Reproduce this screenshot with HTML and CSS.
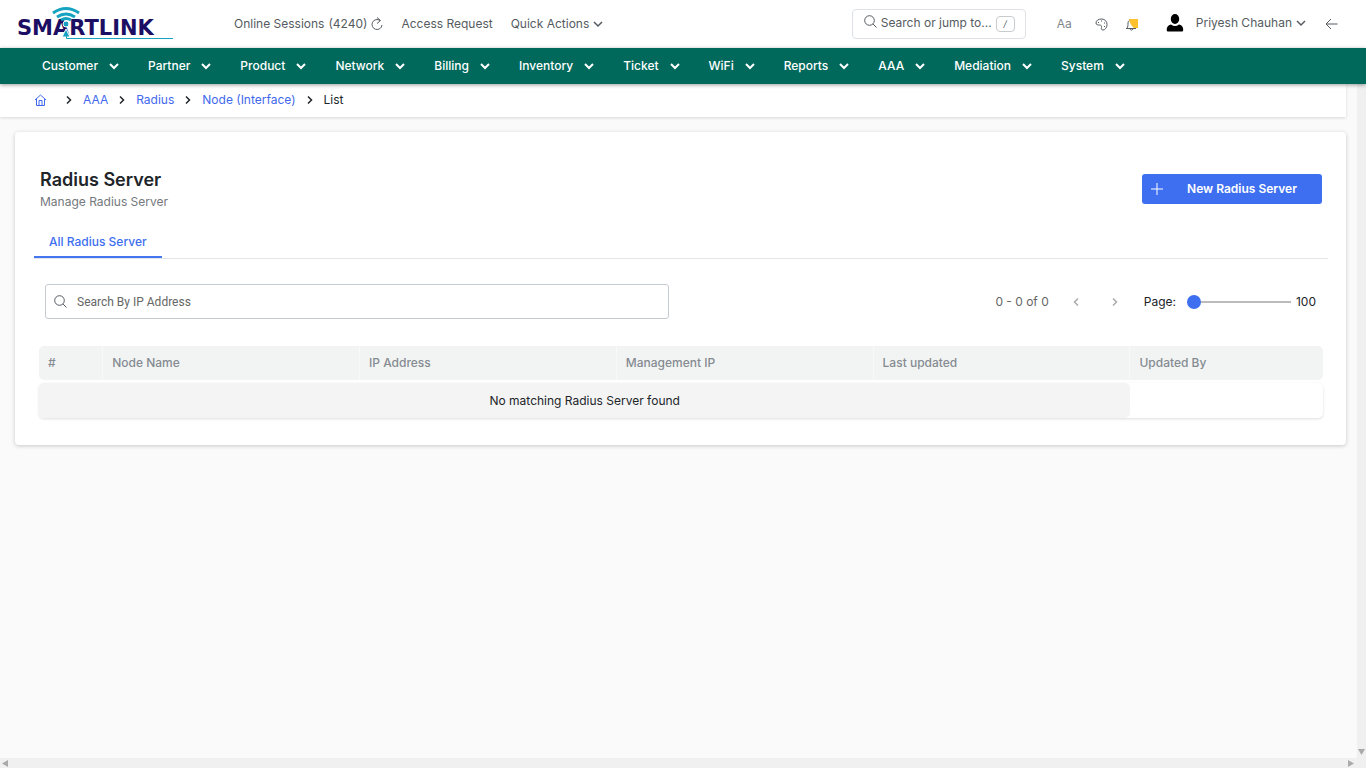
FILE: index.html
```html
<!DOCTYPE html>
<html lang="en">
<head>
<meta charset="utf-8">
<title>Radius Server</title>
<link rel="stylesheet" href="styles.css">
</head>
<body>
<svg class="defs" aria-hidden="true">
  <symbol id="down" viewBox="0 0 10 10"><path d="M1 3l4 4 4-4"/></symbol>
  <symbol id="right" viewBox="0 0 10 10"><path d="M3 1.500l3.500 3.500L3 8.500"/></symbol>
  <symbol id="left" viewBox="0 0 10 10"><path d="M7 1.500L3.500 5 7 8.500"/></symbol>
  <symbol id="search" viewBox="0 0 13 13"><circle cx="5.500" cy="5.500" r="4.800"/><path d="M9 9l3.500 3.500"/></symbol>
</svg>
<header class="topbar">
  <a class="logo" href="#" aria-label="Smartlink">
    <svg width="162" height="36" viewBox="0 0 162 36">
      <text class="logo-text" x="4" y="29">SMARTLINK</text>
      <g class="logo-wave"><path d="M40 7q13-9 26 0"/><path d="M44 11q9-6 18 0"/><path d="M48 14q5-3 10 0"/></g>
      <circle class="logo-dot" cx="53" cy="18" r="3"/>
      <path class="logo-dot" d="M53 23l-4 8h8z"/>
      <path class="logo-line" d="M53.500 28v4.500H160"/>
    </svg>
  </a>
  <nav class="quick">
    <a class="sessions" href="#"><span>Online Sessions</span><span>(4240)</span></a>
    <button class="icon refresh" aria-label="Refresh sessions"><svg class="line" width="12" height="14" viewBox="0 0 12 14"><path d="M9 3.500A5 5 0 1 0 11 8M6 .5l3.500 3L6 6.500"/></svg></button>
    <a class="access" href="#">Access Request</a>
    <button class="quick-actions">Quick Actions <svg class="line medium" width="10" height="10"><use href="#down"/></svg></button>
  </nav>
  <div class="tools">
    <button class="jump"><svg class="line" width="13" height="13"><use href="#search"/></svg><span>Search or jump to...</span><kbd>/</kbd></button>
    <button class="font-size">Aa</button>
    <button class="icon palette" aria-label="Theme"><svg class="line" width="13" height="13" viewBox="0 0 13 13"><path d="M1 5C1 2.500 3.500 1 6.500 1 10 1 12 3.500 12 6.500c0 3-2 5.500-4 5.500-1.500 0-2-1-1.500-2.500C7 8 6 7 4.500 7 3 7 1 7 1 5z"/><path d="M3 4.500h1M6 3h1M9 5h1M9 8.500h1"/></svg></button>
    <button class="icon bell" aria-label="Notifications"><svg width="14" height="13" viewBox="0 0 14 13"><path class="line" d="M1 10.500h10M2 10c1-1 1-3 1-5 0-2 1.500-3 3-3s4 1 4 3c0 3 0 4 1 5M5 11c.5 1.500 2.500 1.500 3 0"/><path class="badge" d="M4 1h9v9H9Q5 7 4 1z"/></svg></button>
    <button class="user"><svg width="18" height="18" viewBox="0 0 18 18"><ellipse cx="9" cy="5" rx="4.200" ry="5"/><path d="M1.500 17.500C0 17 .5 11 5 10.500q4 3 8 0c4.500.5 5 6.500 3.500 7z"/></svg><span>Priyesh Chauhan</span><svg class="line medium" width="10" height="10"><use href="#down"/></svg></button>
    <button class="icon" aria-label="Back"><svg class="line" width="13" height="12" viewBox="0 0 13 12"><path d="M12.500 6H1M6 1L1 6l5 5"/></svg></button>
  </div>
</header>
<nav class="menu">
  <button>Customer<svg class="line" width="10" height="10"><use href="#down"/></svg></button>
  <button>Partner<svg class="line" width="10" height="10"><use href="#down"/></svg></button>
  <button>Product<svg class="line" width="10" height="10"><use href="#down"/></svg></button>
  <button>Network<svg class="line" width="10" height="10"><use href="#down"/></svg></button>
  <button>Billing<svg class="line" width="10" height="10"><use href="#down"/></svg></button>
  <button>Inventory<svg class="line" width="10" height="10"><use href="#down"/></svg></button>
  <button>Ticket<svg class="line" width="10" height="10"><use href="#down"/></svg></button>
  <button>WiFi<svg class="line" width="10" height="10"><use href="#down"/></svg></button>
  <button>Reports<svg class="line" width="10" height="10"><use href="#down"/></svg></button>
  <button>AAA<svg class="line" width="10" height="10"><use href="#down"/></svg></button>
  <button>Mediation<svg class="line" width="10" height="10"><use href="#down"/></svg></button>
  <button>System<svg class="line" width="10" height="10"><use href="#down"/></svg></button>
</nav>
<div class="viewport">
  <main class="page">
    <nav class="crumbs" aria-label="Breadcrumb">
      <a class="home" href="#" aria-label="Home"><svg class="line" width="13" height="12" viewBox="0 0 13 12"><path d="M1 6l5.500-5L12 6M2.500 5v6.500h8V5M5 11V6.500h3V11"/></svg></a>
      <svg class="line" width="10" height="10"><use href="#right"/></svg>
      <a href="#">AAA</a>
      <svg class="line" width="10" height="10"><use href="#right"/></svg>
      <a href="#">Radius</a>
      <svg class="line" width="10" height="10"><use href="#right"/></svg>
      <a href="#">Node (Interface)</a>
      <svg class="line" width="10" height="10"><use href="#right"/></svg>
      <span>List</span>
    </nav>
    <section class="card">
      <div class="heading">
        <div><h1>Radius Server</h1><p>Manage Radius Server</p></div>
        <button class="primary"><svg class="line" width="12" height="12" viewBox="0 0 12 12"><path d="M6 0v12M0 6h12"/></svg><span>New Radius Server</span></button>
      </div>
      <div class="tabs"><button>All Radius Server</button></div>
      <div class="filters">
        <label class="search"><svg class="line" width="13" height="13"><use href="#search"/></svg><input type="text" aria-label="Search By IP Address" placeholder="Search By IP Address"></label>
        <div class="pager">
          <span class="range">0 - 0 of 0</span>
          <button class="icon" aria-label="Previous page"><svg class="line medium" width="10" height="10"><use href="#left"/></svg></button>
          <button class="icon next" aria-label="Next page"><svg class="line medium" width="10" height="10"><use href="#right"/></svg></button>
          <label for="size">Page:</label>
          <input id="size" type="range" min="100" max="500" value="100">
          <output for="size">100</output>
        </div>
      </div>
      <table>
        <colgroup><col class="col-number"><col><col><col><col><col class="col-last"></colgroup>
        <thead><tr><th>#</th><th>Node Name</th><th>IP Address</th><th>Management IP</th><th>Last updated</th><th>Updated By</th></tr></thead>
        <tbody><tr><td class="empty" colspan="5">No matching Radius Server found</td><td></td></tr></tbody>
      </table>
    </section>
  </main>
  <div class="track-y"><svg width="7" height="6" viewBox="0 0 7 6"><path d="M0 0h7L3.500 6z"/></svg></div>
</div>
<div class="track-x"><svg width="6" height="7" viewBox="0 0 6 7"><path d="M6 0v7L0 3.500z"/></svg><svg width="6" height="7" viewBox="0 0 6 7"><path d="M0 0v7l6-3.500z"/></svg></div>
</body>
</html>
```
FILE: styles.css
```css
* { box-sizing: border-box; }
body {
  margin: 0;
  height: 100vh;
  display: flex;
  flex-direction: column;
  overflow: hidden;
  background: #fafafa;
  color: #212529;
  font: 12px/18px Inter, "Liberation Sans", sans-serif;
}
a { color: inherit; text-decoration: none; }
button { font: inherit; color: inherit; border: 0; padding: 0; background: none; display: flex; align-items: center; white-space: nowrap; }
svg { display: block; flex: none; }
.defs { position: absolute; width: 0; height: 0; }
.line { fill: none; stroke: currentColor; stroke-width: 1; }
.medium { stroke-width: 1.5; }

.topbar { height: 48px; flex: none; display: flex; align-items: center; padding: 0 28px 0 13px; background: #fff; color: #555b61; }
.logo { width: 221px; }
.logo-text { font: bold 21px "DejaVu Sans", sans-serif; fill: #1c0e62; }
.logo-wave { fill: none; stroke: #16a3c1; stroke-width: 3; }
.logo-dot { fill: #16a3c1; stroke: #fff; stroke-width: 1; }
.logo-line { fill: none; stroke: #16a3c1; stroke-width: 1; }
.quick { display: flex; align-items: center; white-space: nowrap; }
.sessions { display: flex; gap: 4px; }
.refresh { margin-left: 4px; }
.access { margin: 0 18px; }
.quick-actions { gap: 4px; }
.tools { display: flex; align-items: center; margin-left: auto; }
.jump { width: 174px; height: 30px; border: 1px solid #dee2e6; border-radius: 4px; padding: 0 11px 3px; gap: 4px; }
.jump > svg { margin-bottom: 2px; }
kbd { flex: none; width: 19px; height: 16px; margin-left: auto; margin-top: 2px; border: 1px solid #c9cccf; border-radius: 4px; font: italic 9px/14px Inter, sans-serif; text-align: center; }
.font-size { margin: 0 23px 0 31px; color: #81868a; }
.bell { margin: 0 27px 0 17px; }
.badge { fill: #fdc02f; }
.user { gap: 12px; margin-right: 19px; padding-bottom: 3px; }
.user > svg:first-child { color: #000; fill: #000; }
.user > .line { margin-left: -4px; }
.user > span { margin-right: -4px; }

.menu { height: 36px; flex: none; display: flex; align-items: center; gap: 29px; padding: 0 42px; background: #00695c; color: #fff; font-weight: 500; box-shadow: 0 1px 4px #0006; z-index: 1; }
.menu button { gap: 11px; }
.menu svg { stroke-width: 2; }

.viewport { flex: 1; min-height: 0; display: flex; }
.page { flex: 1; padding-right: 11px; }
.crumbs { height: 33px; display: flex; align-items: center; gap: 9px; padding: 0 34px 2px; background: #fff; box-shadow: 0 1px 3px #0002; }
.crumbs a { color: #4169ed; }
.crumbs .home { margin-right: 8px; }
.crumbs > svg { stroke-width: 1.5; }
.card { margin: 15px 0 0 15px; padding: 36px 18px 24px 19px; background: #fff; border-radius: 4px; box-shadow: 0 1px 4px #0003; }
.heading { display: flex; justify-content: space-between; align-items: center; padding: 0 6px; }
h1 { margin: 0; font-size: 18px; line-height: 24px; font-weight: 600; }
p { margin: 0; line-height: 20px; color: #75797d; }
.primary { width: 180px; height: 30px; margin-bottom: 2px; padding: 0 9px; border-radius: 3px; background: #3d6ff0; color: #fff; font-weight: 600; }
.primary span { flex: 1; padding-left: 8px; text-align: center; }
.tabs { margin-top: 15px; border-bottom: 1px solid #e2e4e6; }
.tabs button { height: 31px; padding: 0 15px; border-bottom: 2px solid #4576f0; color: #3d6ff0; font-weight: 500; }
.filters { display: flex; align-items: center; justify-content: space-between; margin: 25px 12px 27px 11px; }
.search { width: 50%; max-width: 624px; height: 35px; display: flex; align-items: center; gap: 8px; padding: 0 8px; border: 1px solid #c6cbd1; border-radius: 3px; color: #555b61; }
.search input { flex: 1; border: 0; outline: 0; font: 12px Roboto, sans-serif; }
.search input::placeholder { color: #666; }
.pager { display: flex; align-items: center; }
.range { color: #666; margin-right: 22px; }
.pager .icon { color: #aaa; }
.pager .next { margin: 0 24px 0 29px; }
.pager input { appearance: none; width: 104px; height: 14px; margin: 0 5px 0 11px; background: linear-gradient(#bbb, #bbb) center / 100% 2px no-repeat; }
.pager input::-webkit-slider-thumb { appearance: none; width: 14px; height: 14px; border-radius: 50%; background: #3d6ff0; }
table { width: calc(100% - 10px); margin: 0 5px; table-layout: fixed; border-collapse: separate; border-spacing: 0 3px; margin-top: -3px; }
.col-number { width: 5%; }
.col-last { width: 15%; }
th { height: 34px; padding: 0 9px; text-align: left; font-weight: 500; color: #858b91; background: #f2f4f4; border-right: 1px solid #f7f8f8; }
th:first-child { border-radius: 5px 0 0 5px; }
th:last-child { border: 0; border-radius: 0 5px 5px 0; }
td { height: 35px; padding: 0; }
tbody tr { border-radius: 5px; box-shadow: 0 1px 3px #0002; }
.empty { background: #f4f4f4; border-radius: 5px; text-align: center; }
.track-y { width: 9px; display: flex; align-items: flex-end; justify-content: center; padding-bottom: 3px; background: #f0f0f0; }
.track-x { height: 10px; flex: none; display: flex; align-items: center; justify-content: space-between; padding: 0 12px 0 2px; background: #f0f0f0; }
.track-y svg, .track-x svg { fill: #aaa; }
```
